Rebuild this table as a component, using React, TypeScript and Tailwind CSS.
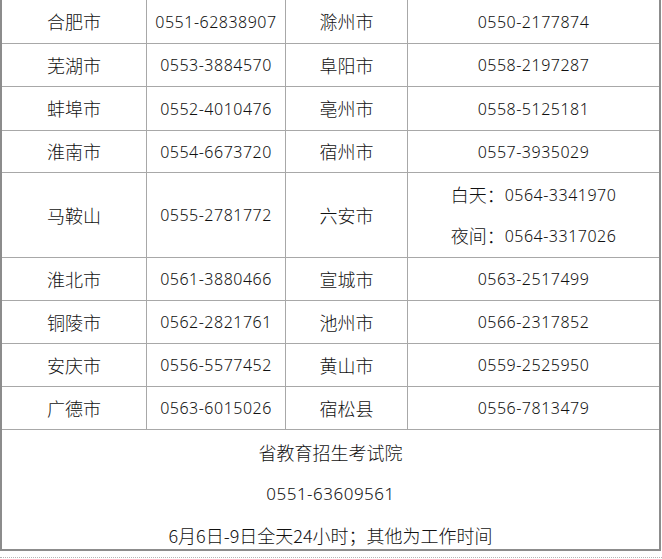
import React from "react";

const cjk = { fontFamily: '"Noto Sans CJK SC", "Noto Sans", sans-serif' };
const num = { fontFamily: '"Noto Sans", "Noto Sans CJK SC", sans-serif' };

type Row = { a: string; b: string; c: string; d: string[]; h: string };

const rows: Row[] = [
  { a: "合肥市", b: "0551-62838907", c: "滁州市", d: ["0550-2177874"], h: "h-[44px]" },
  { a: "芜湖市", b: "0553-3884570", c: "阜阳市", d: ["0558-2197287"], h: "h-[43px]" },
  { a: "蚌埠市", b: "0552-4010476", c: "亳州市", d: ["0558-5125181"], h: "h-[44px]" },
  { a: "淮南市", b: "0554-6673720", c: "宿州市", d: ["0557-3935029"], h: "h-[42px]" },
  { a: "马鞍山", b: "0555-2781772", c: "六安市", d: ["白天：|0564-3341970", "夜间：|0564-3317026"], h: "h-[85px]" },
  { a: "淮北市", b: "0561-3880466", c: "宣城市", d: ["0563-2517499"], h: "h-[43px]" },
  { a: "铜陵市", b: "0562-2821761", c: "池州市", d: ["0566-2317852"], h: "h-[43px]" },
  { a: "安庆市", b: "0556-5577452", c: "黄山市", d: ["0559-2525950"], h: "h-[43px]" },
  { a: "广德市", b: "0563-6015026", c: "宿松县", d: ["0556-7813479"], h: "h-[43px]" },
];

function Phone({ text }: { text: string }) {
  if (text.includes("|")) {
    const [label, n] = text.split("|");
    return (
      <div className="h-[41px] flex items-center justify-center">
        <span className="text-[18px] font-light" style={cjk}>{label}</span>
        <span className="text-[16px] font-light tracking-[0.5px]" style={num}>{n}</span>
      </div>
    );
  }
  return (
    <span className="text-[16px] font-light tracking-[0.5px]" style={num}>
      {text}
    </span>
  );
}

export default function App() {
  return (
    <div className="w-[662px] h-[559px] bg-white text-[#111111] flex flex-col overflow-hidden">
      <div className="w-[661px] h-[551px] shrink-0 border-l-2 border-r-2 border-b-2 border-[#8c8c8c] flex flex-col">
        {rows.map((r, i) => (
          <div key={i} className={`flex shrink-0 border-b border-[#a8a8a8] ${r.h}`}>
            <div className="w-[145px] shrink-0 border-r border-[#a8a8a8] flex items-center justify-center">
              <span className="text-[18px] font-light" style={cjk}>{r.a}</span>
            </div>
            <div className="w-[139px] shrink-0 border-r border-[#a8a8a8] flex items-center justify-center">
              <Phone text={r.b} />
            </div>
            <div className="w-[122px] shrink-0 border-r border-[#a8a8a8] flex items-center justify-center">
              <span className="text-[18px] font-light" style={cjk}>{r.c}</span>
            </div>
            <div className="flex-1 flex flex-col items-center justify-center">
              {r.d.map((t, j) => (
                <Phone key={j} text={t} />
              ))}
            </div>
          </div>
        ))}
        <div className="flex-1 flex flex-col items-center pt-[1px]">
          <div className="h-[42px] shrink-0 flex items-center text-[18px] font-light" style={cjk}>
            省教育招生考试院
          </div>
          <div className="h-[42px] shrink-0 flex items-center text-[17px] font-light tracking-[0.5px]" style={num}>
            0551-63609561
          </div>
          <div className="h-[40px] shrink-0 flex items-center text-[18px] font-light" style={cjk}>
            6月6日-9日全天24小时；其他为工作时间
          </div>
        </div>
      </div>
      <div className="mt-[6px] w-[662px] shrink-0 border-t border-dotted border-[#b5b5b5]" />
    </div>
  );
}
